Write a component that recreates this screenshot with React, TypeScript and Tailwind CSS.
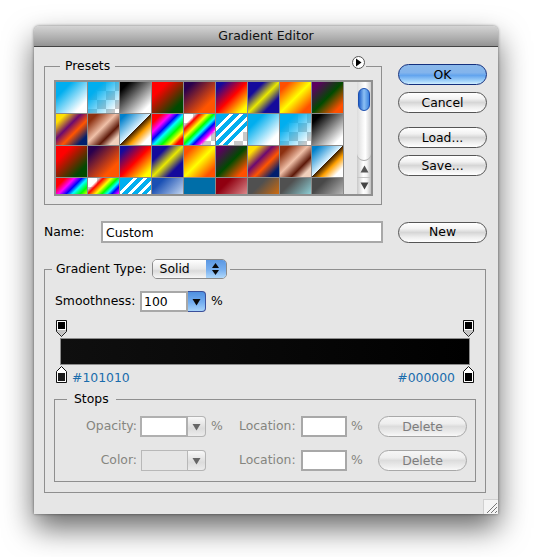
import React from "react";

const blueWhite = "bg-[linear-gradient(135deg,#00aeef_25%,#fff_80%)]";
const blueClear = "[background:linear-gradient(135deg,#00aeef_25%,#00aeef00_90%),conic-gradient(#c8c8c8_25%,#fff_0_50%,#c8c8c8_0_75%,#fff_0)_0_0/18px_18px]";
const blackWhite = "bg-[linear-gradient(135deg,#000_15%,#fff_85%)]";
const redGreen = "bg-[linear-gradient(135deg,#ff0000_25%,#004a00_80%)]";
const violetOrange = "bg-[linear-gradient(135deg,#29004e_15%,#ff5500_75%)]";
const blueRedYellow = "bg-[linear-gradient(135deg,#140a9c_12%,#ff0000_50%,#ffff00_88%)]";
const blueYellowBlue = "bg-[linear-gradient(135deg,#140a9c_25%,#e8e800_50%,#140a9c_75%)]";
const orangeYellow = "bg-[linear-gradient(135deg,#ff5000_15%,#ffff00_50%,#ff5000_85%)]";
const violetGreen = "bg-[linear-gradient(135deg,#5c0060_12%,#004a00_50%,#ff5000_85%)]";
const yellowViolet = "bg-[linear-gradient(135deg,#ffe000_15%,#6c0a70_40%,#ff5500_60%,#001f6e_85%)]";
const copper = "bg-[linear-gradient(135deg,#8c3010_15%,#f0c0a8_45%,#5c1808_68%,#f0d0bc_85%)]";
const chrome = "bg-[linear-gradient(135deg,#0080cc_10%,#e0f4ff_49%,#402000_50%,#ffa000_65%,#fff_85%)]";
const spectrum = "bg-[linear-gradient(135deg,#ff0000_15%,#ff00ff_30%,#0000ff_42%,#00ffff_52%,#00ff00_65%,#ffff00_78%,#ff0000_88%)]";
const clearRainbow = "[background:linear-gradient(135deg,#fff0_18%,#ff0000_25%,#ffff00_38%,#00ff00_48%,#00ffff_56%,#0000ff_64%,#ff00ff_74%,#fff0_80%),conic-gradient(#c8c8c8_25%,#fff_0_50%,#c8c8c8_0_75%,#fff_0)_0_0/18px_18px]";
const stripes = "[background:linear-gradient(135deg,#00aeef_22%,#fff_22%_29%,#00aeef_29%_38%,#fff_38%_45%,#00aeef_45%_54%,#fff_54%_61%,#00aeef_61%_68%,#fff_68%_74%,#fff0_74%),conic-gradient(#c8c8c8_25%,#fff_0_50%,#c8c8c8_0_75%,#fff_0)_0_0/18px_18px]";

const presets = [
  blueWhite, blueClear, blackWhite, redGreen, violetOrange, blueRedYellow, blueYellowBlue, orangeYellow, violetGreen,
  yellowViolet, copper, chrome, spectrum, clearRainbow, stripes, blueWhite, blueClear, blackWhite,
  redGreen, violetOrange, blueRedYellow, blueYellowBlue, orangeYellow, violetGreen, yellowViolet, copper, chrome,
  spectrum, clearRainbow, stripes,
  "bg-[linear-gradient(135deg,#1a50b4_20%,#d0e0f4_80%)]",
  "bg-[#006ea8]",
  "bg-[linear-gradient(135deg,#900010_25%,#e8a0a0_85%)]",
  "bg-[linear-gradient(135deg,#505050_30%,#e87000_85%)]",
  "bg-[linear-gradient(135deg,#505050_25%,#98e4ec_85%)]",
  "bg-[linear-gradient(135deg,#484848_25%,#c8c8c8_85%)]",
];

function AquaButton({ label, primary, disabled }: { label: string; primary?: boolean; disabled?: boolean }) {
  let tone = "border-[#555] text-black bg-[linear-gradient(#fff_0%,#f2f2f2_30%,#d6d6d6_50%,#eee_75%,#fff_100%)]";
  if (primary) tone = "border-[#14307e] text-black bg-[linear-gradient(#8ab8ea_0%,#83b4ec_40%,#62a4ee_55%,#a4d4fa_85%,#cfeeff_100%)]";
  if (disabled) tone = "border-[#a8a8a8] text-[#7d7d7d] bg-[linear-gradient(#f6f6f6_0%,#eeeeee_35%,#dcdcdc_50%,#ececec_80%,#f8f8f8_100%)]";
  return (
    <button className={`w-[89px] h-[21px] rounded-full border pt-px leading-none ${tone}`}>
      {label}
    </button>
  );
}

function DropButton({ disabled }: { disabled?: boolean }) {
  const tone = disabled
    ? "border-[#b4b4b4] bg-[linear-gradient(#f8f8f8,#dcdcdc_60%,#ececec)]"
    : "border-[#3a4f9a] bg-[linear-gradient(#4f8fdf,#74aef0_55%,#a8d4fa)]";
  return (
    <div className={`w-[18px] h-[21px] flex items-center justify-center rounded-r-[4px] border border-l-0 ${tone}`}>
      <svg width="9" height="8" viewBox="0 0 9 8">
        <path d="M0.5 1H8.5L4.5 7.5Z" fill={disabled ? "#666" : "#0a0a0a"} />
      </svg>
    </div>
  );
}

function TopStop() {
  return (
    <svg width="11" height="17" viewBox="0 0 11 17">
      <path d="M0.5 0.5H10.5V11.5L5.5 16.5L0.5 11.5Z" fill="#fff" stroke="#111" />
      <path d="M1 10H10V11.5L5.5 16L1 11.5Z" fill="#c4c4c4" />
      <rect x="2" y="2" width="7" height="7" fill="#000" />
    </svg>
  );
}

function BottomStop({ fill }: { fill: string }) {
  return (
    <svg width="11" height="17" viewBox="0 0 11 17">
      <path d="M5.5 0.5L10.5 5.5V16.5H0.5V5.5Z" fill="#fff" stroke="#111" />
      <rect x="2" y="7" width="7" height="8" fill={fill} />
    </svg>
  );
}

function StopRow({ label, swatch }: { label: string; swatch?: boolean }) {
  return (
    <div className="flex items-center h-[21px] text-[#85857f]">
      <div className="w-[82px] text-right">{label}:</div>
      {swatch ? (
        <div className="ml-[4px] w-[47px] h-[21px] border border-[#b8b8b8] bg-[#e6e6e6]" />
      ) : (
        <input readOnly className="ml-[3px] w-[48px] h-[21px] border-2 border-[#b0b0b0] bg-white outline-none" />
      )}
      <DropButton disabled />
      <div className="ml-[5px] w-[28px]">{swatch ? "" : "%"}</div>
      <div className="w-[57px]">Location:</div>
      <input readOnly className="ml-[5px] w-[46px] h-[21px] border-2 border-[#a8a8a8] bg-white outline-none" />
      <div className="ml-[4px] w-[27px]">%</div>
      <AquaButton label="Delete" disabled />
    </div>
  );
}

export default function App() {
  return (
    <div className="w-[534px] h-[557px] overflow-hidden bg-white pt-[26px] pl-[34px] text-[12.4px] text-black font-['DejaVu_Sans',sans-serif]">
      <div className="relative w-[464px] h-[488px] rounded-t-[5px] bg-[#e6e6e6] shadow-[0_14px_30px_rgba(0,0,0,0.6),0_0_3px_rgba(0,0,0,0.5)]">
        <div className="h-[21px] flex items-center justify-center rounded-t-[5px] border-b border-[#444] bg-[linear-gradient(#d4d4d4,#a8a8a8_70%,#939393)] text-[12.5px] text-[#111]">
          Gradient Editor
        </div>

        <div className="pl-[10px] pr-[11px]">
          <div className="flex pt-[11px]">
            <fieldset className="relative w-[338px] min-w-0 border border-[#8f8f8f] pl-[9px] pr-[8px] pb-[8px]">
              <legend className="ml-[6px] px-[5px] h-[16px] leading-[16px]">Presets</legend>
              <div className="absolute top-[-19px] right-[15px] w-[16px] h-[14px] flex items-center justify-center bg-[#e6e6e6]">
                <div className="w-[13px] h-[13px] rounded-full border border-[#555] bg-white flex items-center justify-center">
                  <svg width="7" height="9" viewBox="0 0 7 9">
                    <path d="M1 0.5L6.5 4.5L1 8.5Z" fill="#000" />
                  </svg>
                </div>
              </div>
              <div className="mt-[6px] flex h-[116px] border-2 border-[#8f8f8f]">
                <div className="w-[301px] h-[112px] overflow-hidden">
                  <div className="w-[288px] grid grid-cols-[repeat(9,31px)] auto-rows-[31px] gap-px bg-[#8a8a8a]">
                    {presets.map((cls, i) => (
                      <div key={i} className={cls} />
                    ))}
                  </div>
                </div>
                <div className="w-[14px] flex flex-col bg-[linear-gradient(90deg,#c8c8c8,#fff_45%,#f4f4f4_70%,#c0c0c0)]">
                  <div className="h-[79px] rounded-b-[7px] pt-[6px] flex justify-center border-b border-[#aaa] bg-[linear-gradient(90deg,#dcdcdc,#f8f8f8_45%,#fff_60%,#cfcfcf)]">
                    <div className="w-[12px] h-[23px] rounded-full border border-[#1c4fb0] bg-[linear-gradient(90deg,#1f5fc8,#8cc0f4_50%,#3f86e0)]" />
                  </div>
                  <div className="flex-1 flex items-center justify-center border-b border-[#c4c4c4]">
                    <svg width="9" height="8" viewBox="0 0 9 8">
                      <path d="M4.5 0.5L8.5 7.5H0.5Z" fill="#555" />
                    </svg>
                  </div>
                  <div className="h-[16px] flex items-center justify-center">
                    <svg width="9" height="8" viewBox="0 0 9 8">
                      <path d="M0.5 0.5H8.5L4.5 7.5Z" fill="#444" />
                    </svg>
                  </div>
                </div>
              </div>
            </fieldset>

            <div className="ml-[16px] pt-[6px] flex flex-col">
              <AquaButton label="OK" primary />
              <div className="mt-[7px]"><AquaButton label="Cancel" /></div>
              <div className="mt-[14px]"><AquaButton label="Load..." /></div>
              <div className="mt-[7px]"><AquaButton label="Save..." /></div>
            </div>
          </div>

          <div className="mt-[16px] flex items-center h-[22px]">
            <div className="w-[57px]">Name:</div>
            <input
              readOnly
              value="Custom"
              className="w-[282px] h-[22px] border-2 border-[#a8a8a8] bg-white pl-[3px] outline-none"
            />
            <div className="ml-[15px]"><AquaButton label="New" /></div>
          </div>

          <fieldset className="mt-[16px] w-[442px] min-w-0 border border-[#8f8f8f] px-[10px] pb-[10px]">
            <legend className="ml-[-3px] pl-[4px] pr-[3px] h-[20px] flex items-center">
              <span>Gradient Type:</span>
              <div className="ml-[5px] w-[75px] h-[20px] flex rounded-[5px] border border-[#8a8a8a] overflow-hidden">
                <div className="flex-1 pl-[7px] leading-[18px] bg-[linear-gradient(#fff,#e8e8e8_50%,#dadada_60%,#f6f6f6)]">Solid</div>
                <div className="w-[20px] flex flex-col items-center justify-center gap-[2px] bg-[linear-gradient(#5b97e2,#78b0f0_55%,#b0d8fa)]">
                  <svg width="7" height="5" viewBox="0 0 7 5"><path d="M3.5 0L7 5H0Z" fill="#0a0a0a" /></svg>
                  <svg width="7" height="5" viewBox="0 0 7 5"><path d="M0 0H7L3.5 5Z" fill="#0a0a0a" /></svg>
                </div>
              </div>
            </legend>

            <div className="mt-[12px] flex items-center h-[21px]">
              <div className="w-[85px]">Smoothness:</div>
              <input
                readOnly
                value="100"
                className="w-[48px] h-[21px] border-2 border-[#a8a8a8] bg-white pl-[2px] outline-none"
              />
              <DropButton />
              <div className="ml-[5px]">%</div>
            </div>

            <div className="mt-[8px] h-[17px] flex justify-between px-px">
              <TopStop />
              <TopStop />
            </div>
            <div className="mx-[5px] mt-px h-[27px] border border-[#8c8c8c] bg-[linear-gradient(90deg,#0f0f0f,#000)]" />
            <div className="mt-px h-[17px] flex justify-between px-px">
              <div className="flex items-center">
                <BottomStop fill="#1c1c1c" />
                <span className="ml-[5px] text-[#1a6cac] leading-[17px] pt-[5px]">#101010</span>
              </div>
              <div className="flex items-center">
                <span className="mr-[8px] text-[#1a6cac] leading-[17px] pt-[5px]">#000000</span>
                <BottomStop fill="#000" />
              </div>
            </div>

            <fieldset className="mt-[8px] min-w-0 ml-[-1px] mr-[-1px] border border-[#8f8f8f] pb-[10px]">
              <legend className="ml-[12px] px-[7px] h-[16px] leading-[16px]">Stops</legend>
              <div className="mt-[9px]"><StopRow label="Opacity" /></div>
              <div className="mt-[13px]"><StopRow label="Color" swatch /></div>
            </fieldset>
          </fieldset>
        </div>

        <div className="absolute right-0 bottom-0 w-[15px] h-[15px] bg-[#f4f4f4] border-l border-t border-[#d0d0d0]">
          <svg width="14" height="14" viewBox="0 0 14 14">
            <path d="M3 13L13 3M7 13L13 7M11 13L13 11" stroke="#777" strokeWidth="1" fill="none" />
          </svg>
        </div>
      </div>
    </div>
  );
}
